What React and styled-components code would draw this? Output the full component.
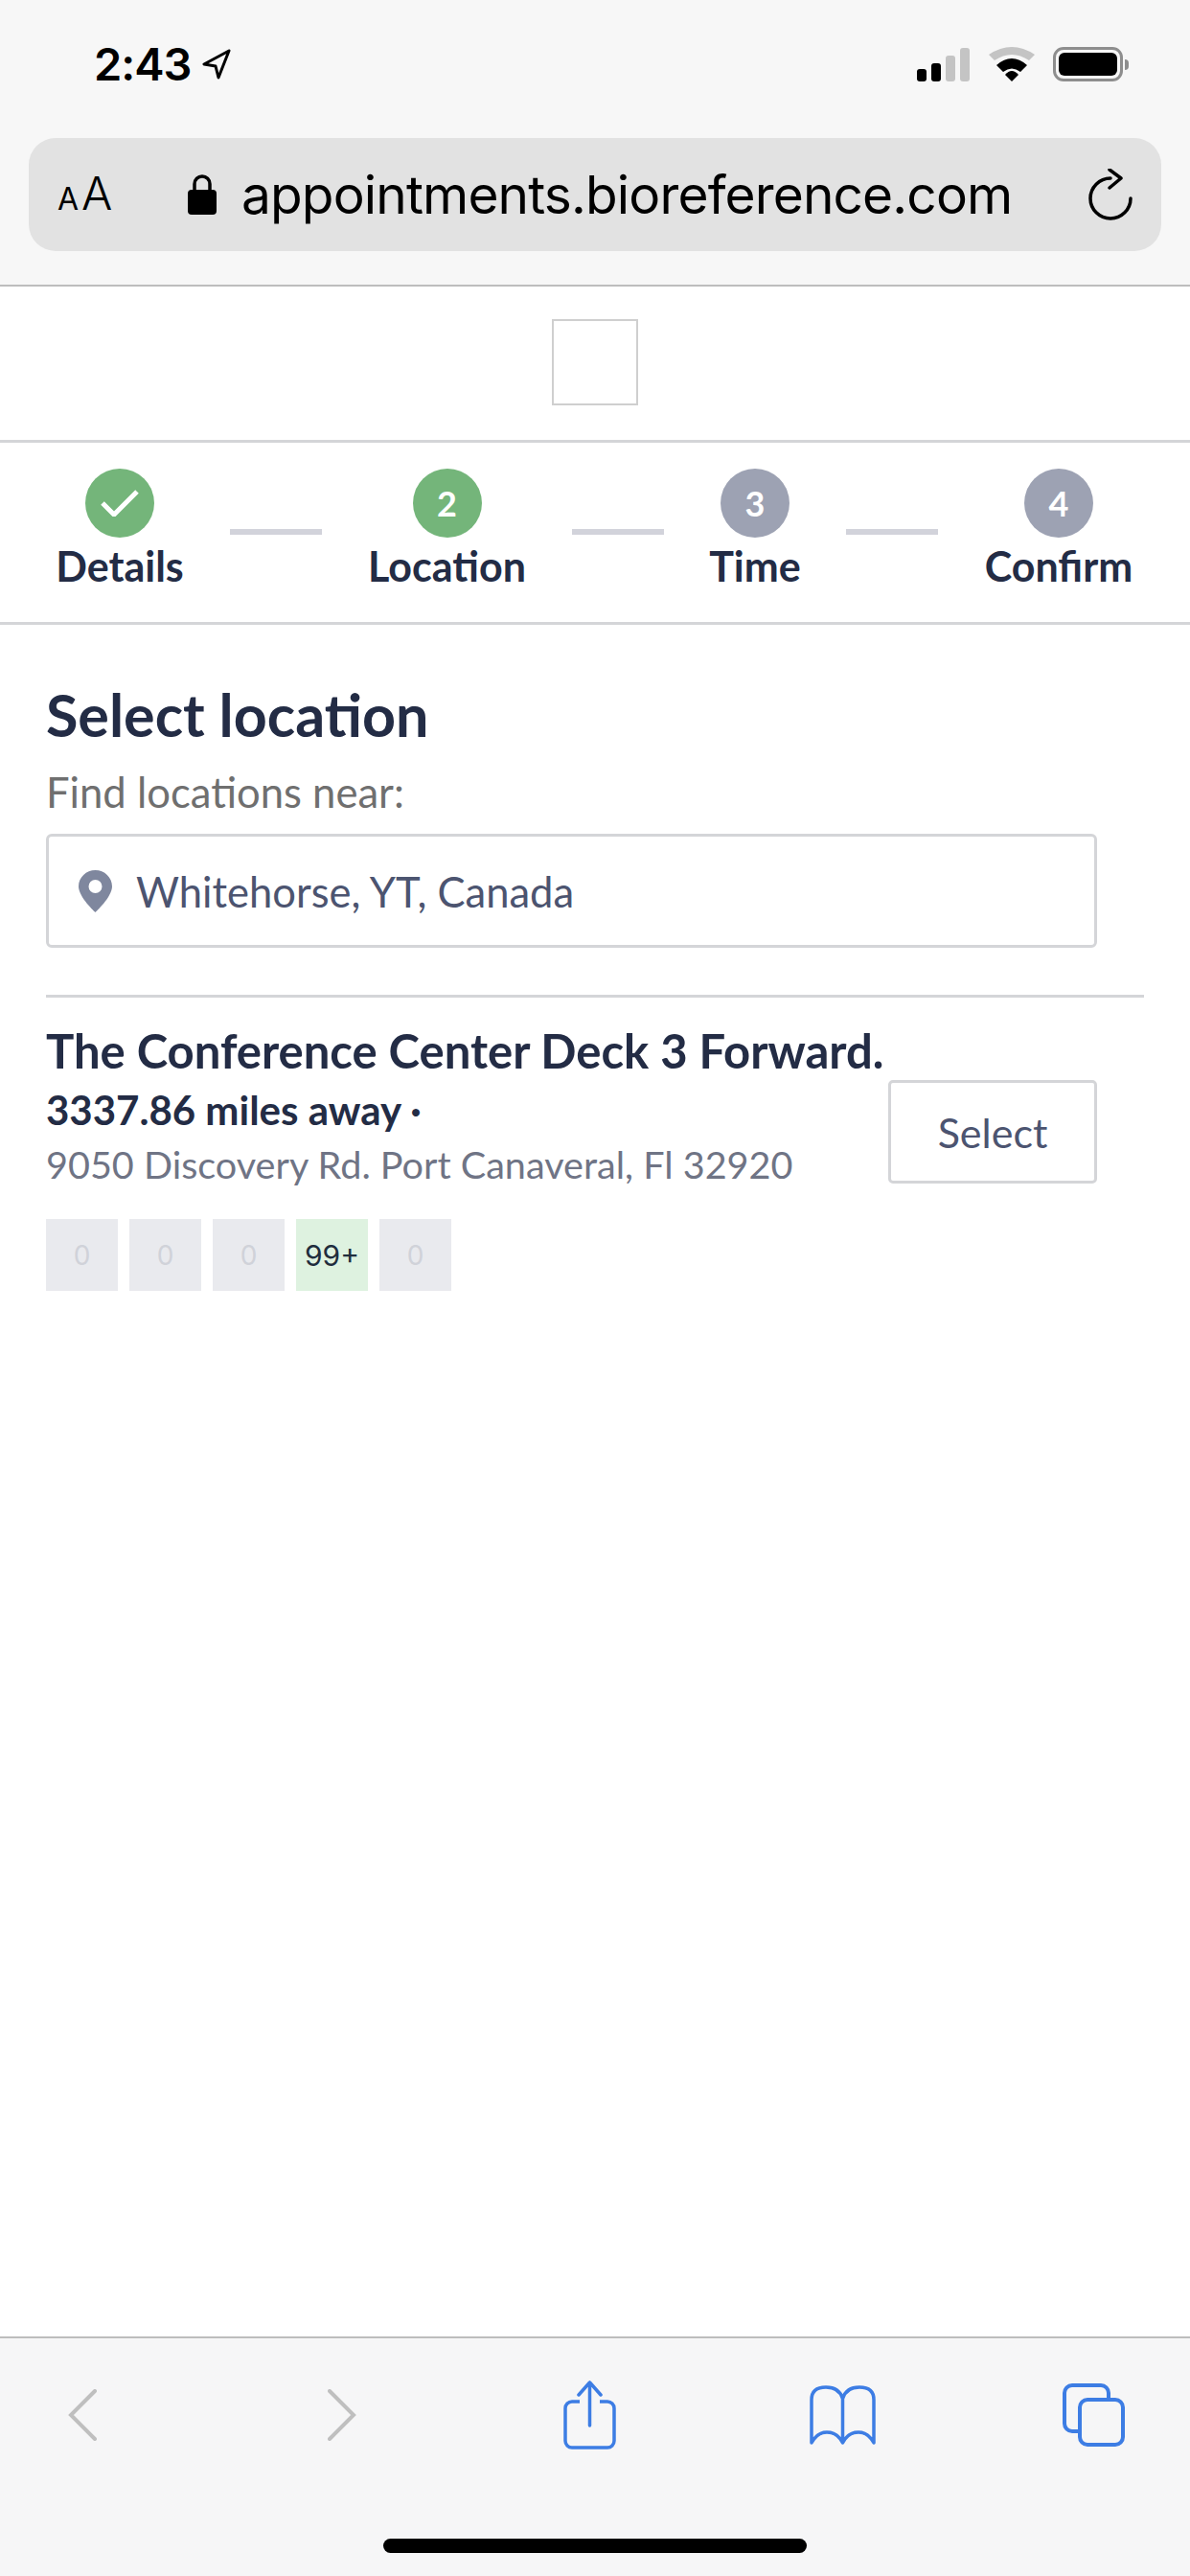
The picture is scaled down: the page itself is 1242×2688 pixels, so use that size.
import React from 'react';
import styled, { createGlobalStyle } from 'styled-components';

const GlobalStyle = createGlobalStyle`
  html, body {
    margin: 0;
    padding: 0;
    background: #ffffff;
  }
  * {
    box-sizing: border-box;
  }
`;

const BRAND_FONT = `'Lato', 'Noto Sans', sans-serif`;
const SYSTEM_FONT = `'Inter', 'Liberation Sans', sans-serif`;
const NAVY = '#232c45';
const SLATE = '#4c5470';
const LINE = '#d4d5d8';
const BLUE = '#3d7de4';

const steps = [
  { id: 1, label: 'Details', state: 'done', width: 130 },
  { id: 2, label: 'Location', state: 'active', width: 161 },
  { id: 3, label: 'Time', state: 'todo', width: 90 },
  { id: 4, label: 'Confirm', state: 'todo', width: 152 },
];

const slots = ['0', '0', '0', '99+', '0'];

export default function App() {
  return (
    <>
      <GlobalStyle />
      <Page>
        <BrowserTop>
          <StatusBar>
            <Clock>
              <ClockText>2:43</ClockText>
              <svg width="30" height="32" viewBox="0 0 30 32">
                <path d="M28 2 L2 16 L14 18 L17 30 Z" fill="none" stroke="#000" strokeWidth="3" strokeLinejoin="round" />
              </svg>
            </Clock>
            <StatusIcons>
              <Signal>
                <SignalBar $h={13} $on />
                <SignalBar $h={19} $on />
                <SignalBar $h={27} />
                <SignalBar $h={35} />
              </Signal>
              <svg width="48" height="36" viewBox="0 0 48 36">
                <path d="M0 8 Q24 -8 48 8 L42 14 Q24 2 6 14 Z" fill="#c4c4c4" />
                <path d="M8 19 Q24 5 40 19 L33 26 Q24 19 15 26 Z" fill="#000" />
                <path d="M17 29 Q24 21 31 29 L24 36 Z" fill="#000" />
              </svg>
              <Battery>
                <BatteryFill />
              </Battery>
              <BatteryNub />
            </StatusIcons>
          </StatusBar>
          <AddressBar>
            <TextSize>
              <SmallA>A</SmallA>
              <BigA>A</BigA>
            </TextSize>
            <svg width="30" height="42" viewBox="0 0 30 42">
              <path d="M7 18 V10 a8 8 0 0 1 16 0 V18" fill="none" stroke="#000" strokeWidth="3.5" />
              <rect x="0" y="16" width="30" height="26" rx="4" fill="#000" />
            </svg>
            <Url>appointments.bioreference.com</Url>
            <svg width="46" height="54" viewBox="0 0 46 54">
              <path d="M23 10 A21 21 0 1 0 44 31" fill="none" stroke="#000" strokeWidth="3.5" strokeLinecap="round" />
              <path d="M22 1 L34 10 L22 20" fill="none" stroke="#000" strokeWidth="3.5" strokeLinecap="round" strokeLinejoin="round" />
            </svg>
          </AddressBar>
        </BrowserTop>

        <LogoRow>
          <LogoBox />
        </LogoRow>

        <Stepper>
          {steps.map((step, index) => (
            <React.Fragment key={step.id}>
              {index > 0 && <Connector />}
              <Step $width={step.width}>
                <StepCircle $state={step.state}>
                  {step.state === 'done' ? (
                    <svg width="40" height="28" viewBox="0 0 40 28">
                      <path d="M2 14 L14 26 L38 2" fill="none" stroke="#fff" strokeWidth="5" />
                    </svg>
                  ) : (
                    step.id
                  )}
                </StepCircle>
                <StepLabel>{step.label}</StepLabel>
              </Step>
            </React.Fragment>
          ))}
        </Stepper>

        <Content>
          <Heading>Select location</Heading>
          <FieldLabel>Find locations near:</FieldLabel>
          <SearchBox>
            <svg width="35" height="44" viewBox="0 0 35 44">
              <path
                fillRule="evenodd"
                fill="#7f879e"
                d="M17.5 0 C8 0 0 7.5 0 17 C0 28 17.5 44 17.5 44 C17.5 44 35 28 35 17 C35 7.5 27 0 17.5 0 Z M17.5 10 a7 7 0 1 1 0 14 a7 7 0 1 1 0 -14 Z"
              />
            </svg>
            <SearchText>Whitehorse, YT, Canada</SearchText>
          </SearchBox>
          <Divider />
          <LocationName>The Conference Center Deck 3 Forward.</LocationName>
          <LocationRow>
            <div>
              <Distance>3337.86 miles away ·</Distance>
              <Address>9050 Discovery Rd. Port Canaveral, Fl 32920</Address>
            </div>
            <SelectButton>Select</SelectButton>
          </LocationRow>
          <Availability>
            {slots.map((slot, index) => (
              <Slot key={index} $open={slot !== '0'}>
                {slot}
              </Slot>
            ))}
          </Availability>
        </Content>

        <BrowserBottom>
          <ToolRow>
            <svg width="30" height="54" viewBox="0 0 30 54">
              <path d="M28 2 L3 27 L28 52" fill="none" stroke="#bfbfbf" strokeWidth="4" strokeLinecap="round" />
            </svg>
            <svg width="30" height="54" viewBox="0 0 30 54">
              <path d="M2 2 L27 27 L2 52" fill="none" stroke="#bfbfbf" strokeWidth="4" strokeLinecap="round" />
            </svg>
            <svg width="55" height="72" viewBox="0 0 55 72">
              <path d="M27.5 2 V47 M16 15 L27.5 2 L39 15" fill="none" stroke={BLUE} strokeWidth="3.5" strokeLinecap="round" strokeLinejoin="round" />
              <path d="M17 22 H9 a7 7 0 0 0 -7 7 V63 a7 7 0 0 0 7 7 H46 a7 7 0 0 0 7 -7 V29 a7 7 0 0 0 -7 -7 H38" fill="none" stroke={BLUE} strokeWidth="3.5" />
            </svg>
            <svg width="69" height="62" viewBox="0 0 69 62">
              <path
                d="M34.5 14 V60 M34.5 14 Q31 2 17 2 Q2 2 2 15 V60 Q8 49 18 49 Q29 49 34.5 60 Q40 49 51 49 Q61 49 67 60 V15 Q67 2 52 2 Q38 2 34.5 14 Z"
                fill="none"
                stroke={BLUE}
                strokeWidth="3.5"
                strokeLinejoin="round"
              />
            </svg>
            <svg width="65" height="66" viewBox="0 0 65 66">
              <path d="M16 50 H10 a8 8 0 0 1 -8 -8 V10 a8 8 0 0 1 8 -8 H40 a8 8 0 0 1 8 8 V16" fill="none" stroke={BLUE} strokeWidth="4" />
              <rect x="18" y="17" width="45" height="47" rx="8" fill="none" stroke={BLUE} strokeWidth="4" />
            </svg>
          </ToolRow>
          <HomeIndicator />
        </BrowserBottom>
      </Page>
    </>
  );
}

const Page = styled.div`
  width: 1242px;
  height: 2688px;
  display: flex;
  flex-direction: column;
  overflow: hidden;
  background: #ffffff;
`;

const BrowserTop = styled.header`
  height: 299px;
  flex-shrink: 0;
  padding: 49px 30px 0;
  background: #f7f7f7;
  border-bottom: 2px solid #bdbdbd;
`;

const StatusBar = styled.div`
  height: 36px;
  display: flex;
  justify-content: space-between;
  align-items: center;
  padding: 0 34px 0 68px;
`;

const Clock = styled.div`
  display: flex;
  align-items: center;
  gap: 12px;
`;

const ClockText = styled.span`
  font-family: ${SYSTEM_FONT};
  font-size: 47px;
  font-weight: 600;
  letter-spacing: -1px;
  line-height: 36px;
  color: #000000;
`;

const StatusIcons = styled.div`
  display: flex;
  align-items: center;
`;

const Signal = styled.div`
  display: flex;
  align-items: flex-end;
  gap: 5px;
  height: 35px;
  margin-right: 20px;
`;

const SignalBar = styled.span`
  width: 10px;
  height: ${({ $h }) => $h}px;
  border-radius: 3px;
  background: ${({ $on }) => ($on ? '#000000' : '#c4c4c4')};
`;

const Battery = styled.div`
  width: 73px;
  height: 36px;
  margin-left: 19px;
  padding: 3px;
  border: 3px solid #8e8e8e;
  border-radius: 11px;
`;

const BatteryFill = styled.div`
  height: 100%;
  background: #000000;
  border-radius: 6px;
`;

const BatteryNub = styled.span`
  width: 4px;
  height: 11px;
  margin-left: 2px;
  background: #8e8e8e;
  border-radius: 0 4px 4px 0;
`;

const AddressBar = styled.div`
  height: 118px;
  margin-top: 59px;
  display: flex;
  align-items: center;
  padding: 0 30px 0 30px;
  background: #e2e2e2;
  border-radius: 28px;
`;

const TextSize = styled.div`
  width: 136px;
  padding-top: 4px;
  display: flex;
  align-items: baseline;
  font-family: ${SYSTEM_FONT};
  color: #000000;
`;

const SmallA = styled.span`
  font-size: 32px;
  line-height: 50px;
`;

const BigA = styled.span`
  font-size: 48px;
  font-weight: 300;
  line-height: 50px;
  margin-left: 3px;
`;

const Url = styled.div`
  flex: 1;
  padding-left: 26px;
  font-family: ${SYSTEM_FONT};
  font-size: 55px;
  letter-spacing: -0.85px;
  color: #000000;
  white-space: nowrap;
`;

const LogoRow = styled.div`
  height: 163px;
  flex-shrink: 0;
  display: flex;
  justify-content: center;
  align-items: center;
  border-bottom: 3px solid ${LINE};
`;

const LogoBox = styled.div`
  width: 90px;
  height: 90px;
  margin-top: -2px;
  border: 2px solid #cfcfcf;
`;

const Stepper = styled.nav`
  height: 190px;
  flex-shrink: 0;
  display: flex;
  align-items: flex-start;
  padding: 27px 0 0 60px;
  border-bottom: 3px solid ${LINE};
`;

const Step = styled.div`
  width: ${({ $width }) => $width}px;
  display: flex;
  flex-direction: column;
  align-items: center;
`;

const StepCircle = styled.div`
  width: 72px;
  height: 72px;
  flex-shrink: 0;
  display: flex;
  justify-content: center;
  align-items: center;
  border-radius: 50%;
  background: ${({ $state }) => ($state === 'todo' ? '#9da2b3' : '#74b57a')};
  font-family: ${BRAND_FONT};
  font-size: 36px;
  font-weight: 700;
  color: #ffffff;
`;

const StepLabel = styled.div`
  margin-top: 5px;
  font-family: ${BRAND_FONT};
  font-size: 43px;
  font-weight: 700;
  line-height: 50px;
  color: ${NAVY};
  white-space: nowrap;
`;

const Connector = styled.div`
  width: 96px;
  height: 6px;
  flex-shrink: 0;
  margin: 63px 50px 0;
  background: #d2d3db;
`;

const Content = styled.main`
  flex: 1;
  padding: 0 48px;
`;

const Heading = styled.h1`
  margin: 60px 0 0;
  font-family: ${BRAND_FONT};
  font-size: 61px;
  font-weight: 700;
  line-height: 68px;
  color: ${NAVY};
`;

const FieldLabel = styled.div`
  margin-top: 21px;
  font-family: ${BRAND_FONT};
  font-size: 43.6px;
  line-height: 50px;
  color: #6f6f6f;
`;

const SearchBox = styled.div`
  width: 1097px;
  height: 119px;
  margin-top: 19px;
  display: flex;
  align-items: center;
  padding-left: 31px;
  border: 3px solid ${LINE};
  border-radius: 6px;
`;

const SearchText = styled.div`
  margin-left: 25px;
  font-family: ${BRAND_FONT};
  font-size: 43.5px;
  color: ${SLATE};
`;

const Divider = styled.div`
  width: 1146px;
  height: 3px;
  margin-top: 49px;
  background: ${LINE};
`;

const LocationName = styled.div`
  margin-top: 28px;
  font-family: ${BRAND_FONT};
  font-size: 49px;
  font-weight: 700;
  line-height: 54px;
  color: ${NAVY};
  white-space: nowrap;
`;

const LocationRow = styled.div`
  width: 1097px;
  margin-top: 4px;
  display: flex;
  justify-content: space-between;
  align-items: flex-start;
`;

const Distance = styled.div`
  margin-top: 3px;
  font-family: ${BRAND_FONT};
  font-size: 42px;
  font-weight: 700;
  line-height: 56px;
  color: ${NAVY};
`;

const Address = styled.div`
  font-family: ${BRAND_FONT};
  font-size: 39.6px;
  line-height: 58px;
  color: #6f7485;
  white-space: nowrap;
`;

const SelectButton = styled.button`
  width: 218px;
  height: 108px;
  padding: 0;
  background: #ffffff;
  border: 3px solid ${LINE};
  border-radius: 5px;
  font-family: ${BRAND_FONT};
  font-size: 43px;
  color: ${SLATE};
`;

const Availability = styled.div`
  margin-top: 28px;
  display: flex;
  gap: 12px;
`;

const Slot = styled.div`
  width: 75px;
  height: 75px;
  display: flex;
  justify-content: center;
  align-items: center;
  background: ${({ $open }) => ($open ? '#def2e0' : '#e9eaee')};
  font-family: ${SYSTEM_FONT};
  font-size: ${({ $open }) => ($open ? 30 : 28)}px;
  color: ${({ $open }) => ($open ? '#1f2d3d' : '#d0d2d9')};
`;

const BrowserBottom = styled.footer`
  height: 250px;
  flex-shrink: 0;
  display: flex;
  flex-direction: column;
  padding-top: 44px;
  background: #f6f6f7;
  border-top: 2px solid #bdbdbd;
`;

const ToolRow = styled.div`
  height: 72px;
  display: grid;
  grid-template-columns: 271px 246px 257px 264px 65px;
  align-items: center;
  padding-left: 71px;
`;

const HomeIndicator = styled.div`
  width: 442px;
  height: 15px;
  margin: 93px auto 0;
  background: #000000;
  border-radius: 8px;
`;
